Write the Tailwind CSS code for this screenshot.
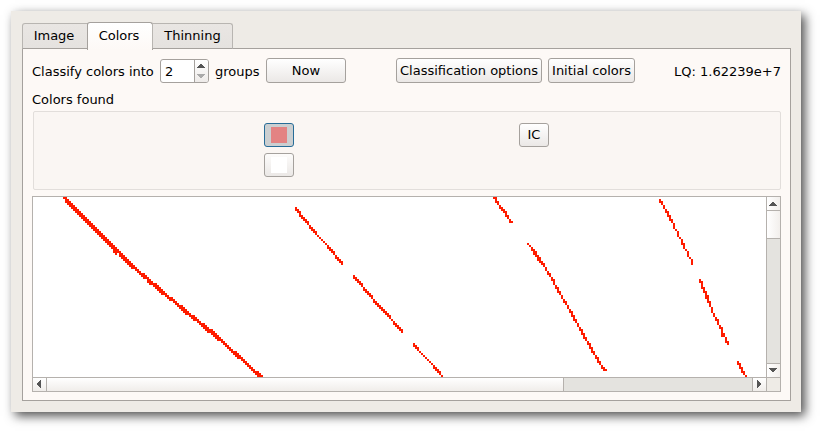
<!DOCTYPE html>
<html lang="en">
<head>
<meta charset="utf-8">
<title>Colors</title>
<script src="https://cdn.jsdelivr.net/npm/@tailwindcss/browser@4"></script>
</head>
<body class="w-[820px] h-[431px] overflow-hidden bg-white pt-[11px] pl-[11px] font-['DejaVu_Sans',sans-serif] text-[13px] leading-4 text-black">
<main class="w-[790px] h-[401px] bg-[#eeebe6] pl-[11px] pt-[10px] shadow-[4px_4px_10px_#000000b0]">
  <nav class="relative z-10 flex items-end h-7">
    <button class="w-[66px] h-[26px] pr-[2px] border border-b-[#a5a19d] border-[#b8b5b1] rounded-tl-[3px] bg-linear-to-b from-[#e9e6e3] to-[#e5e2df]">Image</button>
    <button class="w-[66px] h-7 -ml-px -mb-px border border-b-0 border-[#a5a19d] rounded-t-[3px] bg-linear-to-b from-white to-[#fdf9f6] pb-px pr-[2px]">Colors</button>
    <button class="w-[81px] h-[26px] -ml-px border border-b-[#a5a19d] border-[#b8b5b1] rounded-tr-[3px] bg-linear-to-b from-[#e9e6e3] to-[#e5e2df]">Thinning</button>
  </nav>
  <section class="w-[769px] h-[353px] -mt-px border border-[#a5a19d] bg-[#fdf9f6] pl-[9px] pt-[9px]">
    <div class="flex h-[26px] w-[749px] whitespace-nowrap">
      <span class="w-32 pt-[6px]">Classify colors into</span>
      <div class="flex w-[49px] h-6 mt-px border border-[#a5a19d] rounded-[3px] bg-white overflow-hidden">
        <span class="w-[33px] pl-1 pt-1">2</span>
        <span class="w-[14px] border-l border-[#a5a19d] bg-linear-to-b from-white to-[#eeebe9] flex flex-col items-start pl-[2px] pt-1">
          <svg class="w-2 h-4" viewBox="0 0 8 16" shape-rendering="crispEdges"><path d="M0 4h8v-1h-1v-1h-1v-1h-1v-1h-2v1h-1v1h-1v1h-1z" fill="#555"/><path d="M0 10h8v1h-1v1h-1v1h-1v1h-2v-1h-1v-1h-1v-1h-1z" fill="#aaa"/></svg>
        </span>
      </div>
      <span class="w-[57px] pl-[6px] pt-[6px]">groups</span>
      <button class="w-20 h-[25px] border border-[#a5a19d] rounded-[3px] bg-linear-to-b from-white to-[#ebe8e6]">Now</button>
      <button class="ml-[50px] w-[146px] h-[25px] border border-[#a5a19d] rounded-[3px] bg-linear-to-b from-white to-[#ebe8e6]">Classification options</button>
      <button class="ml-[6px] w-[87px] h-[25px] border border-[#a5a19d] rounded-[3px] bg-linear-to-b from-white to-[#ebe8e6]">Initial colors</button>
      <span class="ml-auto pt-[6px]">LQ: 1.62239e+7</span>
    </div>
    <div class="pt-2 h-[27px]">Colors found</div>
    <div class="ml-px w-[748px] h-[79px] border border-[#e2dedb] rounded-[2px] bg-[#faf6f3] flex pl-[230px] pt-[11px]">
      <div class="flex flex-col gap-[6px]">
        <button class="w-[30px] h-6 border border-[#276d98] rounded-[3px] bg-[#cbcfd1] flex items-center justify-center"><span class="size-4 bg-[#e38383]"></span></button>
        <button class="w-[30px] h-6 border border-[#a5a19d] rounded-[3px] bg-linear-to-b from-[#fdfcfb] to-[#ebe8e6] flex items-center justify-center"><span class="size-4 bg-white"></span></button>
      </div>
      <button class="ml-[225px] w-[30px] h-6 border border-[#a5a19d] rounded-[3px] bg-linear-to-b from-white to-[#ebe8e6]">IC</button>
    </div>
    <div class="mt-[6px] w-[749px] h-[196px] border border-[#b5b1ad] grid grid-cols-[733px_14px] grid-rows-[180px_14px] bg-white">
      <svg class="w-[733px] h-[180px]" viewBox="0 0 733 180" shape-rendering="crispEdges"><path id="trace" fill="#ff1c00"/></svg>
      <div class="border-l border-[#b5b1ad] bg-[#e4e3df] flex flex-col">
        <div class="h-[14px] border-b border-[#b5b1ad] bg-linear-to-r from-white to-[#f2efec] pl-[2px] pt-[5px]"><svg class="w-2 h-1" viewBox="0 0 8 4" shape-rendering="crispEdges"><path d="M0 4h8v-1h-1v-1h-1v-1h-1v-1h-2v1h-1v1h-1v1h-1z" fill="#555"/></svg></div>
        <div class="h-7 border-b border-[#b5b1ad] bg-linear-to-r from-white to-[#f2efec]"></div>
        <div class="mt-auto h-[14px] border-t border-[#b5b1ad] bg-linear-to-r from-white to-[#f2efec] pl-[2px] pt-1"><svg class="w-2 h-1" viewBox="0 0 8 4" shape-rendering="crispEdges"><path d="M0 0h8v1h-1v1h-1v1h-1v1h-2v-1h-1v-1h-1v-1h-1z" fill="#555"/></svg></div>
      </div>
      <div class="border-t border-[#b5b1ad] bg-[#e4e3df] flex">
        <div class="w-[14px] border-r border-[#b5b1ad] bg-linear-to-b from-white to-[#f0edea] pt-[2px] pl-1"><svg class="w-1 h-2" viewBox="0 0 4 8" shape-rendering="crispEdges"><path d="M4 0v8h-1v-1h-1v-1h-1v-1h-1v-2h1v-1h1v-1h1v-1z" fill="#555"/></svg></div>
        <div class="w-[517px] border-r border-[#b5b1ad] bg-linear-to-b from-white to-[#f0edea]"></div>
        <div class="ml-auto w-[14px] border-l border-[#b5b1ad] bg-linear-to-b from-white to-[#f0edea] pt-[2px] pl-1"><svg class="w-1 h-2" viewBox="0 0 4 8" shape-rendering="crispEdges"><path d="M0 0v8h1v-1h1v-1h1v-1h1v-2h-1v-1h-1v-1h-1v-1z" fill="#555"/></svg></div>
      </div>
      <div class="border-t border-l border-[#b5b1ad] bg-[#eeebe6]"></div>
    </div>
  </section>
</main>
<script>
// Each trace: origin in canvas pixels, then one "row,height" entry per column, in cells of 2px.
const traces = [
  [30, 0, "0,1 0,3 1,3 2,3 3,3 4,3 5,3 6,3 7,3 8,3 9,3 10,3 11,3 12,3 13,3 14,3 15,3 16,3 17,3 18,3 19,3 20,3 21,3 22,3 23,3 24,4 25,4 26,2 27,3 28,3 29,3 30,3 31,3 32,3 33,3 34,2 35,2 36,2 37,2 38,2 38,3 39,2 40,3 41,3 42,2 43,2 43,3 44,3 45,3 46,3 47,2 48,2 49,2 50,2 50,2 51,2 52,2 53,2 54,2 54,3 55,3 56,3 57,2 58,2 59,2 59,3 60,2 61,2 62,2 63,2 63,3 64,3 65,3 66,2 66,3 67,3 68,3 69,3 70,2 71,2 72,2 73,2 74,2 75,2 76,2 77,2 77,3 78,3 79,2 80,2 81,2 82,2 83,2 84,2 85,2 86,2 87,2 87,3 88,2 89,1"],
  [262, 10, "0,2 1,2 2,3 4,2 5,2 6,2 7,2 9,2 10,2 11,2 12,2 14,1 15,1 16,1 17,1 18,1 19,2 20,2 21,2 22,2 24,2 25,2 26,2 27,2"],
  [320, 78, "0,2 1,2 2,2 3,2 4,2 6,2 7,2 8,2 9,2 10,2 12,2 13,2 14,2 15,2 16,2 17,2 18,2 19,2 20,2 22,1 23,2 24,2 25,2 26,2 27,2"],
  [380, 146, "0,2 1,2 2,2 4,1 5,1 6,1 7,1 8,1 9,1 10,1 11,2 12,2 13,2 14,2 16,1"],
  [460, 0, "0,1 0,3 2,2 4,2 5,2 6,2 7,3 9,2 11,2 12,1"],
  [494, 46, "0,1 1,1 2,2 3,3 4,3 6,3 7,3 9,2 10,2 12,2 14,2 15,2 17,2 18,3 21,2 22,3 24,2 26,2 28,2 29,2 31,2 33,2 34,3 36,3 38,2 40,2 42,2 43,3 45,3 47,2 49,2 50,3 52,3 54,2 56,2 57,3 59,2 61,2 62,2 63,1"],
  [626, 2, "0,2 1,2 3,2 5,2 6,3 8,3 10,2 12,3 15,1 16,3 19,1 20,3 22,3 25,1 26,3 29,1 30,3"],
  [666, 82, "0,2 1,4 4,3 6,4 8,4 11,3 14,3 17,2 19,2 20,3 23,2 24,5 27,2 29,3 31,2"],
  [704, 164, "0,2 1,3 3,3 5,2 7,1"]
];
let d = "";
for (const [x, y, columns] of traces) {
  columns.split(" ").forEach((entry, i) => {
    const [row, height] = entry.split(",").map(Number);
    d += `M${x + i * 2} ${y + row * 2}h2v${height * 2}h-2z`;
  });
}
document.getElementById("trace").setAttribute("d", d);
</script>
</body>
</html>
